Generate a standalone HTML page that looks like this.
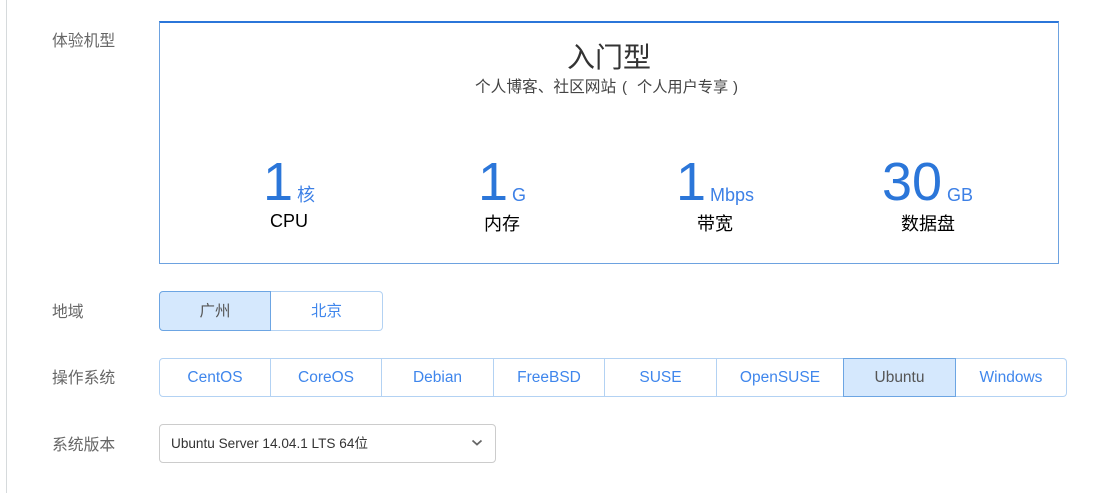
<!DOCTYPE html>
<html lang="zh">
<head>
<meta charset="utf-8">
<style>
html,body{margin:0;padding:0;background:#fff}
body{width:1111px;height:493px;position:relative;overflow:hidden;font-family:"Liberation Sans","Noto Sans CJK SC",sans-serif}
div{position:absolute;box-sizing:border-box;white-space:nowrap}
.line{left:6px;top:0;width:1px;height:493px;background:#d6dadc}
.lb{left:52px;font-size:15.8px;line-height:20px;color:#666}
.box{left:159px;top:21px;width:900px;height:243px;border:1px solid #6da2e0;border-top:2px solid #2b76d9}
.n{font-size:54px;line-height:60px;color:#2b76d9}
.u{font-size:18px;line-height:20px;color:#3d80e6}
.c{font-size:18px;line-height:22px;color:#000;text-align:center}
.s{top:78px;line-height:20px;color:#444}
.tab{top:0;height:100%;text-align:center;font-size:15.5px;color:#3f86ec;border:1px solid #b3d2f3;border-left:none}
.tab.first{border-left:1px solid #b3d2f3;border-radius:4px 0 0 4px}
.tab.last{border-radius:0 4px 4px 0}
.tab.on{background:#d5e8fd;color:#555;border:1px solid #6ca5e3}
</style>
</head>
<body>
<div class="line"></div>
<div class="lb" style="top:32px">体验机型</div>
<div class="lb" style="top:303px">地域</div>
<div class="lb" style="top:369px">操作系统</div>
<div class="lb" style="top:436px">系统版本</div>

<div class="box"></div>
<div style="left:159px;top:40px;width:900px;text-align:center;font-size:28px;line-height:36px;color:#333">入门型</div>
<div class="s" style="left:475px;font-size:15.7px">个人博客、社区网站</div>
<div class="s" style="left:622px;font-size:15px">(</div>
<div class="s" style="left:637px;font-size:15.2px">个人用户专享</div>
<div class="s" style="left:733px;font-size:15px">)</div>

<div class="n" style="left:263px;top:152px">1</div>
<div class="u" style="left:297px;top:185px">核</div>
<div class="c" style="left:229px;top:210px;width:120px">CPU</div>

<div class="n" style="left:478px;top:152px">1</div>
<div class="u" style="left:512px;top:185px">G</div>
<div class="c" style="left:442px;top:213px;width:120px">内存</div>

<div class="n" style="left:676px;top:152px">1</div>
<div class="u" style="left:710px;top:185px">Mbps</div>
<div class="c" style="left:655px;top:213px;width:120px">带宽</div>

<div class="n" style="left:882px;top:152px">30</div>
<div class="u" style="left:947px;top:185px">GB</div>
<div class="c" style="left:868px;top:213px;width:120px">数据盘</div>

<div style="left:159px;top:291px;width:224px;height:40px">
  <div class="tab first on" style="left:0;width:112px;line-height:39px">广州</div>
  <div class="tab last" style="left:112px;width:112px;line-height:39px">北京</div>
</div>

<div style="left:159px;top:358px;width:908px;height:39px">
  <div class="tab first" style="left:0;width:112px;line-height:37px">CentOS</div>
  <div class="tab" style="left:112px;width:111px;line-height:37px">CoreOS</div>
  <div class="tab" style="left:223px;width:112px;line-height:37px">Debian</div>
  <div class="tab" style="left:335px;width:111px;line-height:37px">FreeBSD</div>
  <div class="tab" style="left:446px;width:112px;line-height:37px">SUSE</div>
  <div class="tab" style="left:558px;width:127px;line-height:37px">OpenSUSE</div>
  <div class="tab on" style="left:684px;width:113px;line-height:37px">Ubuntu</div>
  <div class="tab last" style="left:797px;width:111px;line-height:37px">Windows</div>
</div>

<div style="left:159px;top:424px;width:337px;height:39px;border:1px solid #ccc;border-radius:4px"></div>
<div style="left:171px;top:434px;font-size:13.6px;line-height:20px;color:#333">Ubuntu Server 14.04.1 LTS 64位</div>
<svg style="position:absolute;left:471px;top:439px" width="12" height="8" viewBox="0 0 12 8"><path d="M1.5 1.5 L6 5.5 L10.5 1.5" fill="none" stroke="#666" stroke-width="1.8"/></svg>
</body>
</html>
